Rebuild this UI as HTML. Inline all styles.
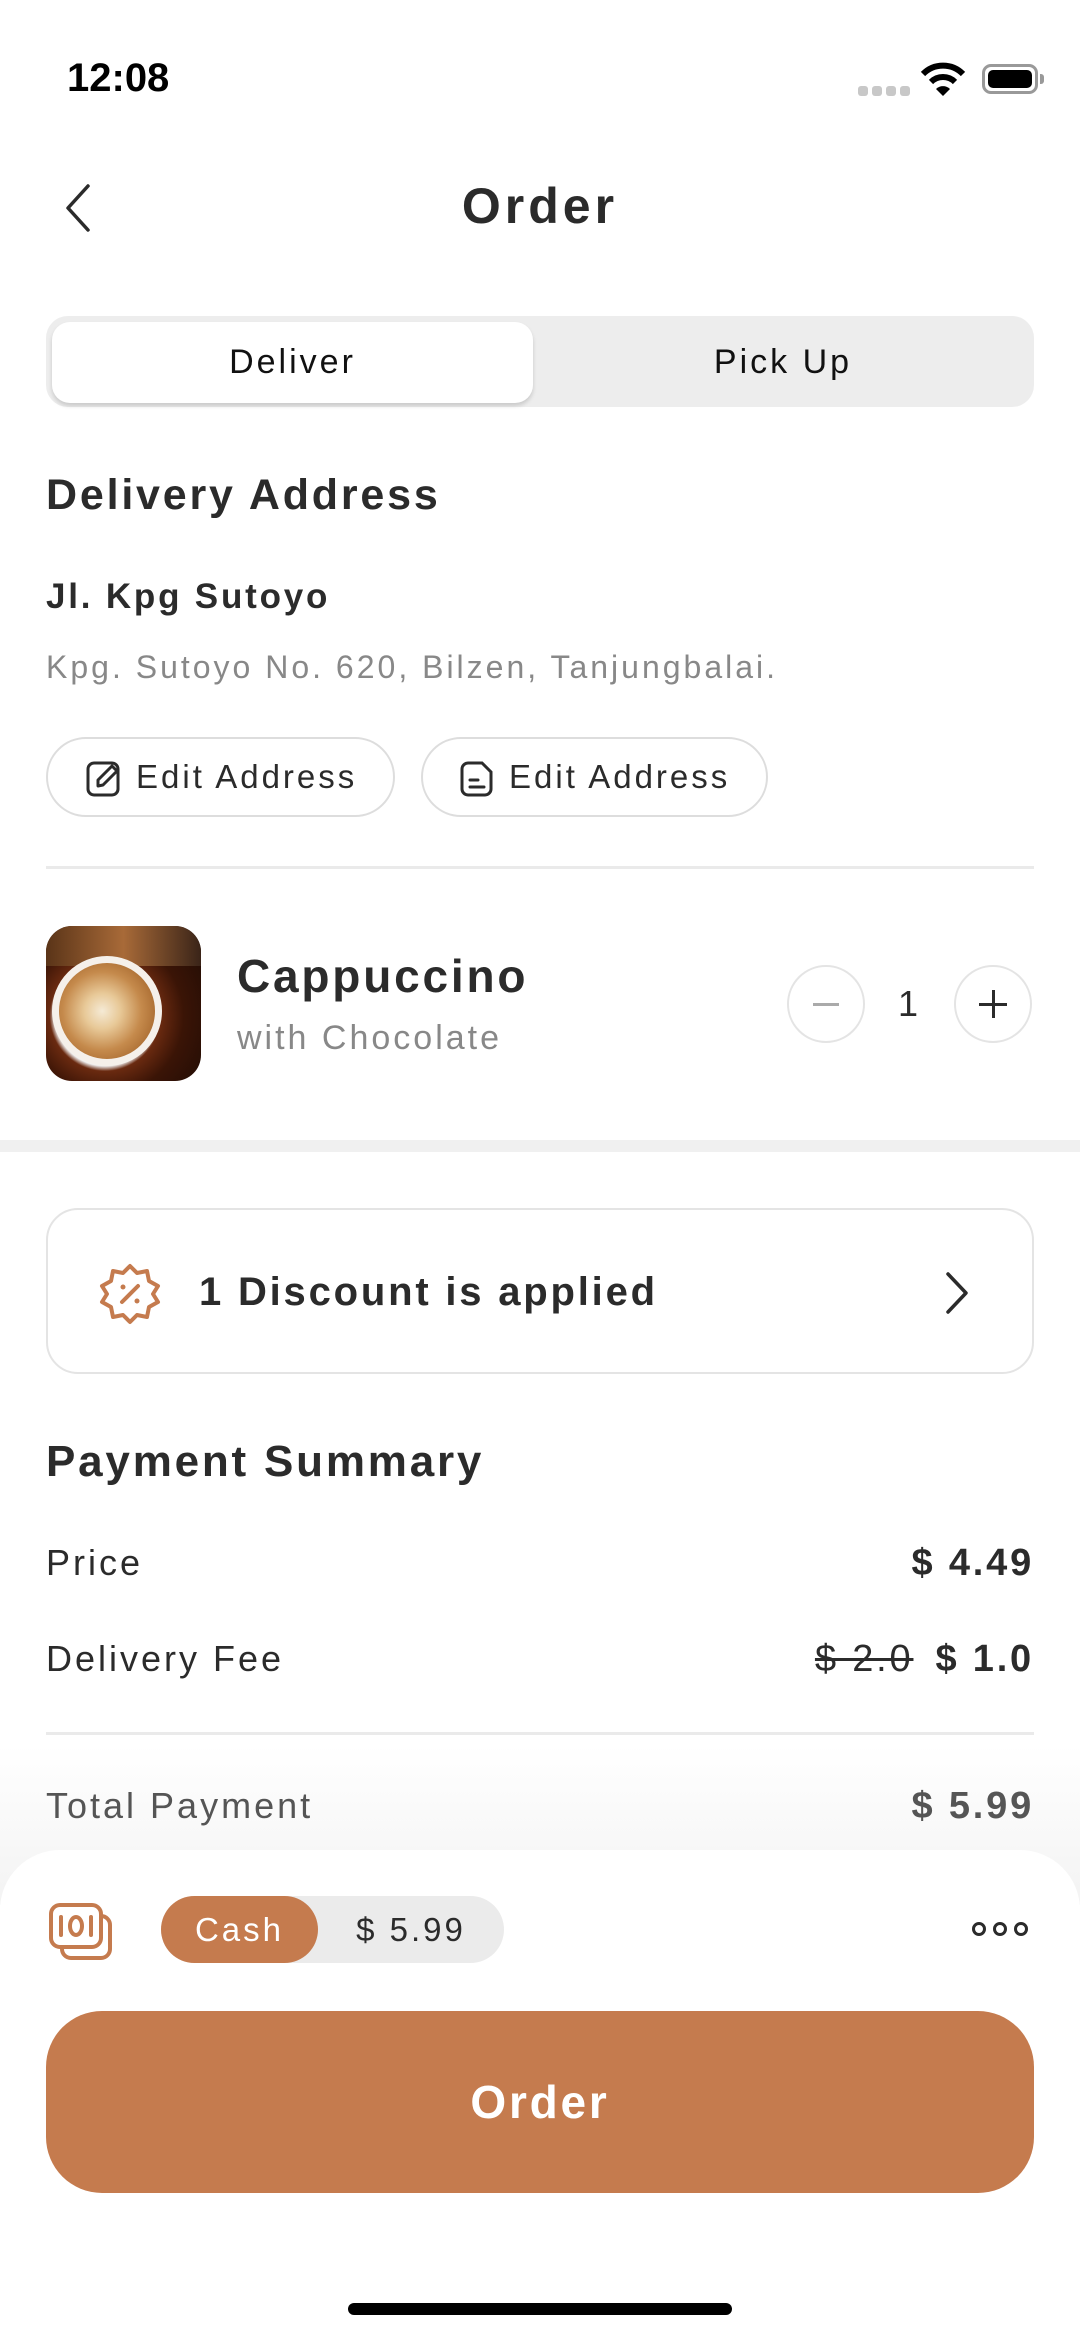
<!DOCTYPE html>
<html><head><meta charset="utf-8"><style>
*{margin:0;padding:0;box-sizing:border-box}
body{width:1080px;height:2340px;background:#fff;font-family:"Liberation Sans",sans-serif;color:#2b2b2b;position:relative;overflow:hidden;letter-spacing:3px}
.a{position:absolute;white-space:nowrap}
.b{font-weight:bold;letter-spacing:2.8px}
</style></head><body>
<div class="a b" style="left:67px;top:56px;line-height:44px;font-size:40px;color:#000;letter-spacing:0">12:08</div>
<div class="a" style="left:858px;top:86px;width:10px;height:10px;border-radius:3px;background:#c8c8c8"></div>
<div class="a" style="left:872px;top:86px;width:10px;height:10px;border-radius:3px;background:#c8c8c8"></div>
<div class="a" style="left:886px;top:86px;width:10px;height:10px;border-radius:3px;background:#c8c8c8"></div>
<div class="a" style="left:900px;top:86px;width:10px;height:10px;border-radius:3px;background:#c8c8c8"></div>
<svg class="a" style="left:920px;top:60px" width="46" height="40" viewBox="0 0 46 40"><path d="M3 14 A28 28 0 0 1 43 14" stroke="#000" stroke-width="6" fill="none"/><path d="M11 22 A17 17 0 0 1 35 22" stroke="#000" stroke-width="6" fill="none"/><path d="M16 29 L23 36 L30 29 A10 10 0 0 0 16 29Z" fill="#000"/></svg>
<div class="a" style="left:982px;top:64px;width:56px;height:30px;border:3px solid #999;border-radius:9px;padding:3px"><div style="width:100%;height:100%;background:#000;border-radius:5px"></div></div>
<div class="a" style="left:1040px;top:74px;width:4px;height:10px;background:#999;border-radius:0 3px 3px 0"></div>

<svg class="a" style="left:62px;top:182px" width="32" height="52" viewBox="0 0 32 52"><path d="M26 4 L6 26 L26 48" stroke="#2b2b2b" stroke-width="3.5" fill="none" stroke-linecap="round" stroke-linejoin="round"/></svg>
<div class="a b" style="left:0;width:1080px;text-align:center;top:180px;line-height:52px;font-size:50px;letter-spacing:4px">Order</div>

<div class="a" style="left:46px;top:316px;width:988px;height:91px;background:#ededed;border-radius:22px"></div>
<div class="a" style="left:52px;top:322px;width:481px;height:81px;background:#fff;border-radius:18px;box-shadow:0 3px 4px rgba(0,0,0,0.15)"></div>
<div class="a" style="left:52px;width:481px;text-align:center;top:342px;line-height:40px;font-size:34px;color:#111">Deliver</div>
<div class="a" style="left:533px;width:500px;text-align:center;top:342px;line-height:40px;font-size:34px;color:#111">Pick Up</div>

<div class="a b" style="left:46px;top:470px;line-height:50px;font-size:43px">Delivery Address</div>
<div class="a b" style="left:46px;top:576px;line-height:42px;font-size:35px">Jl. Kpg Sutoyo</div>
<div class="a" style="left:46px;top:648px;line-height:38px;font-size:32px;color:#888">Kpg. Sutoyo No. 620, Bilzen, Tanjungbalai.</div>

<div class="a" style="left:46px;top:737px;width:349px;height:80px;border:2px solid #ddd;border-radius:40px"></div>
<svg class="a" style="left:86px;top:760px" width="36" height="38" viewBox="0 0 36 38"><rect x="2" y="3" width="30" height="32" rx="6" fill="none" stroke="#2b2b2b" stroke-width="3"/><path d="M12 26 L12 20 L26 6 L31 11 L17 25 Z" fill="#fff" stroke="#2b2b2b" stroke-width="3" stroke-linejoin="round"/></svg>
<div class="a" style="left:136px;top:757px;line-height:40px;font-size:33px">Edit Address</div>
<div class="a" style="left:421px;top:737px;width:347px;height:80px;border:2px solid #ddd;border-radius:40px"></div>
<svg class="a" style="left:460px;top:760px" width="34" height="38" viewBox="0 0 34 38"><path d="M8 3 H22 L31 12 V29 A6 6 0 0 1 25 35 H8 A6 6 0 0 1 2 29 V9 A6 6 0 0 1 8 3Z" fill="none" stroke="#2b2b2b" stroke-width="3"/><path d="M10 20 H18 M10 27 H24" stroke="#2b2b2b" stroke-width="3" stroke-linecap="round"/></svg>
<div class="a" style="left:509px;top:757px;line-height:40px;font-size:33px">Edit Address</div>

<div class="a" style="left:46px;top:866px;width:988px;height:3px;background:#eaeaea"></div>

<div class="a" style="left:46px;top:926px;width:155px;height:155px;border-radius:26px;overflow:hidden;background:radial-gradient(circle at 38% 58%,#f2e2c4 0,#d9a56a 18%,#b6783e 33%,#fff 35%,#f0f0f0 38%,#6a2a10 42%,#3a1406 60%,#1a0a04 100%)">
<div style="position:absolute;left:0;top:0;width:155px;height:40px;background:linear-gradient(90deg,#5a3418,#a86a38,#3a2418)"></div>
<div style="position:absolute;left:6px;top:30px;width:110px;height:110px;border-radius:50%;border:7px solid #f5f0ea;background:radial-gradient(circle at 45% 50%,#f5ead5 0,#e8c998 25%,#c58a4c 55%,#a86a30 80%)"></div>
</div>
<div class="a b" style="left:237px;top:948px;line-height:56px;font-size:46px">Cappuccino</div>
<div class="a" style="left:237px;top:1018px;line-height:40px;font-size:34px;color:#888">with Chocolate</div>
<div class="a" style="left:787px;top:965px;width:78px;height:78px;border:2px solid #e4e4e4;border-radius:50%"></div>
<div class="a" style="left:813px;top:1003px;width:26px;height:3px;background:#aaa"></div>
<div class="a" style="left:888px;top:982px;width:40px;text-align:center;line-height:44px;font-size:36px;letter-spacing:0">1</div>
<div class="a" style="left:954px;top:965px;width:78px;height:78px;border:2px solid #e4e4e4;border-radius:50%"></div>
<div class="a" style="left:979px;top:1003px;width:28px;height:3px;background:#2b2b2b"></div>
<div class="a" style="left:991.5px;top:990px;width:3px;height:28px;background:#2b2b2b"></div>

<div class="a" style="left:0;top:1140px;width:1080px;height:12px;background:#f0f0f0"></div>

<div class="a" style="left:46px;top:1208px;width:988px;height:166px;border:2px solid #e4e4e4;border-radius:32px"></div>
<svg class="a" style="left:98px;top:1262px" width="64" height="64" viewBox="0 0 64 64"><path d="M32 4 L39 11 L49 9 L51 19 L60 24 L55 32 L60 40 L51 45 L49 55 L39 53 L32 60 L25 53 L15 55 L13 45 L4 40 L9 32 L4 24 L13 19 L15 9 L25 11 Z" fill="none" stroke="#c57b4e" stroke-width="4" stroke-linejoin="round"/><path d="M24 40 L40 24" stroke="#c57b4e" stroke-width="4" stroke-linecap="round"/><circle cx="25" cy="25" r="2.5" fill="#c57b4e"/><circle cx="39" cy="39" r="2.5" fill="#c57b4e"/></svg>
<div class="a b" style="left:199px;top:1268px;line-height:48px;font-size:40px">1 Discount is applied</div>
<svg class="a" style="left:942px;top:1270px" width="30" height="46" viewBox="0 0 30 46"><path d="M6 4 L24 23 L6 42" stroke="#2b2b2b" stroke-width="3.5" fill="none" stroke-linecap="round" stroke-linejoin="round"/></svg>

<div class="a b" style="left:46px;top:1436px;line-height:52px;font-size:44px">Payment Summary</div>
<div class="a" style="left:46px;top:1541px;line-height:44px;font-size:36px">Price</div>
<div class="a b" style="right:46px;top:1541px;line-height:44px;font-size:38px">$ 4.49</div>
<div class="a" style="left:46px;top:1637px;line-height:44px;font-size:36px">Delivery Fee</div>
<div class="a b" style="right:46px;top:1637px;line-height:44px;font-size:38px"><span style="font-weight:normal;text-decoration:line-through;margin-right:22px">$ 2.0</span>$ 1.0</div>
<div class="a" style="left:46px;top:1732px;width:988px;height:3px;background:#eaeaea"></div>
<div class="a" style="left:0;top:1745px;width:1080px;height:160px;background:linear-gradient(#fff,#f3f3f3)"></div>
<div class="a" style="left:46px;top:1784px;line-height:44px;font-size:36px;color:#555">Total Payment</div>
<div class="a b" style="right:46px;top:1784px;line-height:44px;font-size:38px;color:#555">$ 5.99</div>

<div class="a" style="left:0;top:1850px;width:1080px;height:490px;background:#fff;border-radius:60px 60px 0 0"></div>
<svg class="a" style="left:48px;top:1902px" width="66" height="60" viewBox="0 0 66 60"><rect x="14" y="14" width="48" height="42" rx="9" fill="none" stroke="#c57b4e" stroke-width="4"/><rect x="3" y="3" width="50" height="42" rx="9" fill="#fff" stroke="#c57b4e" stroke-width="4"/><path d="M13 15 V33 M43 15 V33" stroke="#c57b4e" stroke-width="4" stroke-linecap="round"/><ellipse cx="28" cy="24" rx="6" ry="9" fill="none" stroke="#c57b4e" stroke-width="4"/></svg>
<div class="a" style="left:161px;top:1896px;width:343px;height:67px;border-radius:34px;background:#ebebeb"></div>
<div class="a" style="left:161px;top:1896px;width:157px;height:67px;border-radius:34px;background:#c57b4e;color:#fff;text-align:center;line-height:67px;font-size:33px">Cash</div>
<div class="a" style="left:318px;width:186px;text-align:center;top:1896px;line-height:67px;font-size:33px">$ 5.99</div>
<div class="a" style="left:972px;top:1922px;width:14px;height:14px;border:3.5px solid #2b2b2b;border-radius:50%"></div>
<div class="a" style="left:993px;top:1922px;width:14px;height:14px;border:3.5px solid #2b2b2b;border-radius:50%"></div>
<div class="a" style="left:1014px;top:1922px;width:14px;height:14px;border:3.5px solid #2b2b2b;border-radius:50%"></div>

<div class="a b" style="left:46px;top:2011px;width:988px;height:182px;border-radius:56px;background:#c57b4e;color:#fff;text-align:center;line-height:182px;font-size:46px">Order</div>
<div class="a" style="left:348px;top:2303px;width:384px;height:12px;border-radius:6px;background:#000"></div>
</body></html>
